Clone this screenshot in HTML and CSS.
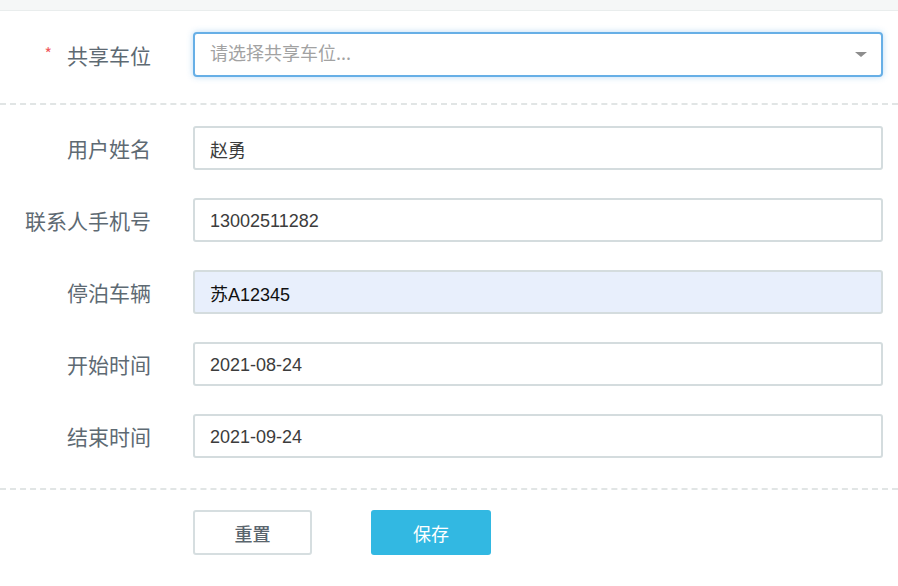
FILE: index.html
```html
<!DOCTYPE html>
<html lang="zh-CN">
<head>
<meta charset="utf-8">
<title>共享车位</title>
<link rel="stylesheet" href="styles.css">
</head>
<body>
<div class="top-bar"></div>

<form class="share-form">
  <div class="form-section first">
    <div class="form-row">
      <label class="form-label required">共享车位</label>
      <div class="select-box">
        <input class="form-input focused" type="text" placeholder="请选择共享车位...">
        <span class="caret"></span>
      </div>
    </div>
  </div>

  <div class="form-section">
    <div class="form-row">
      <label class="form-label">用户姓名</label>
      <input class="form-input" type="text" value="赵勇">
    </div>
    <div class="form-row">
      <label class="form-label">联系人手机号</label>
      <input class="form-input" type="text" value="13002511282">
    </div>
    <div class="form-row">
      <label class="form-label">停泊车辆</label>
      <input class="form-input filled" type="text" value="苏A12345">
    </div>
    <div class="form-row">
      <label class="form-label">开始时间</label>
      <input class="form-input" type="text" value="2021-08-24">
    </div>
    <div class="form-row">
      <label class="form-label">结束时间</label>
      <input class="form-input" type="text" value="2021-09-24">
    </div>
  </div>

  <div class="form-actions">
    <button class="btn btn-default" type="button">重置</button>
    <button class="btn btn-primary" type="button">保存</button>
  </div>
</form>
</body>
</html>
```

FILE: styles.css
```css
html, body {
	margin: 0;
	padding: 0;
	background: #fff;
	font-family: "Noto Sans CJK SC", "Liberation Sans", sans-serif;
}

.top-bar {
	height: 10px;
	background: #f5f7f7;
	border-bottom: 1px solid #e9eded;
}

.form-section {
	display: flex;
	flex-direction: column;
	gap: 28px;
	padding: 21px 0 30px;
	border-bottom: 2px dashed #e1e5e5;
}

.form-section.first {
	padding: 21px 0 26px;
}

.form-row {
	display: flex;
	align-items: center;
	padding-right: 15px;
}

.form-label {
	flex: none;
	width: 151px;
	margin-right: 42px;
	text-align: right;
	font-size: 21px;
	color: #5e6a73;
	white-space: nowrap;
}

.form-label.required::before {
	content: '*';
	color: #f0595c;
	font-size: 16px;
	margin-right: 15px;
	vertical-align: 4px;
}

.form-input {
	flex: 1;
	min-width: 0;
	box-sizing: border-box;
	height: 44px;
	padding: 2px 15px 0;
	border: 2px solid #d4dcde;
	border-radius: 3px;
	background: #fff;
	font-family: "Liberation Sans", "Noto Sans CJK SC", sans-serif;
	font-size: 18px;
	color: #3c3c3c;
	outline: none;
}

.form-input.filled {
	background: #e8effc;
	color: #111;
}

.form-input::placeholder {
	color: #a2a2a2;
	font-family: "Noto Sans CJK SC", sans-serif;
}

.select-box {
	flex: 1;
	display: flex;
	position: relative;
}

.form-input.focused {
	height: 45px;
	padding-top: 0;
	border-color: #67afe6;
	border-radius: 4px;
	box-shadow: 0 0 6px rgba(102, 175, 233, 0.45);
}

.caret {
	position: absolute;
	right: 16px;
	top: 20px;
	width: 0;
	height: 0;
	border-left: 6px solid transparent;
	border-right: 6px solid transparent;
	border-top: 5px solid #8d8d8d;
}

.form-actions {
	display: flex;
	gap: 59px;
	padding: 20px 0 0 193px;
}

.btn {
	width: 119px;
	height: 45px;
	border-radius: 3px;
	font-family: "Noto Sans CJK SC", sans-serif;
	font-size: 18px;
	cursor: pointer;
}

.btn-default {
	background: #fff;
	border: 2px solid #d6dee0;
	color: #5a656d;
	font-weight: 500;
}

.btn-primary {
	width: 120px;
	background: #32b8e2;
	border: none;
	color: #fff;
}
```
